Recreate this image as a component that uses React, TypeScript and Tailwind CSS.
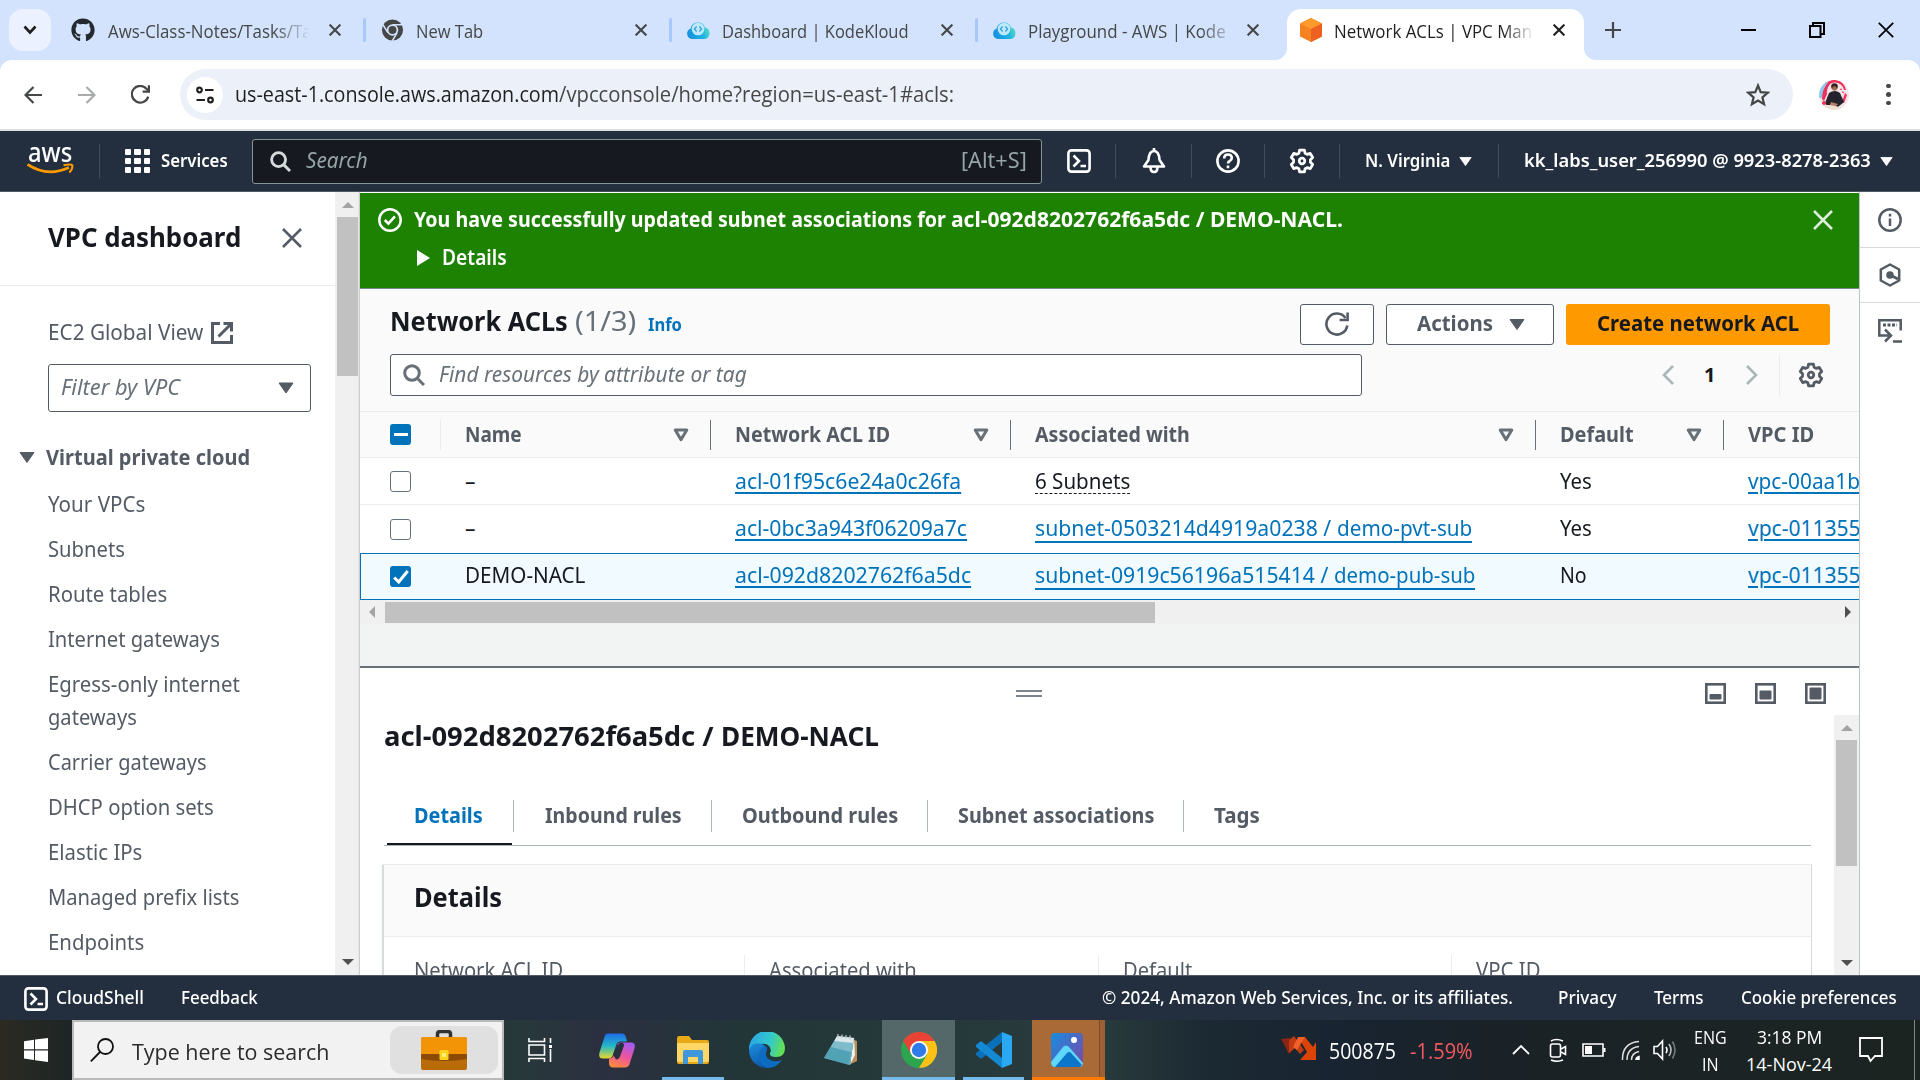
import React, { useLayoutEffect, useRef, useState } from "react";
import { FaGithub } from "react-icons/fa";

type TextProps = { w: number; className?: string; children: React.ReactNode };

/* Single-line text that is condensed or widened to an exact width. */
function T({ w, className = "", children }: TextProps) {
  const ref = useRef<HTMLSpanElement>(null);
  const [scale, setScale] = useState(1);
  useLayoutEffect(() => {
    if (ref.current) setScale(w / ref.current.offsetWidth);
  }, [w]);
  return (
    <span className="inline-block shrink-0 whitespace-nowrap" style={{ width: w }}>
      <span ref={ref} className={`inline-block origin-left ${className}`} style={{ transform: `scaleX(${scale})` }}>
        {children}
      </span>
    </span>
  );
}

type IconProps = { className?: string };

const CloseX = ({ className = "" }: IconProps) => (
  <svg viewBox="0 0 20 20" className={`shrink-0 ${className}`} fill="none" stroke="currentColor">
    <path d="M1 1l18 18M19 1L1 19" />
  </svg>
);

const Caret = ({ className = "" }: IconProps) => (
  <svg viewBox="0 0 16 12" className={`shrink-0 ${className}`} fill="currentColor" stroke="currentColor" strokeLinejoin="round">
    <path d="M1 1h14l-7 10z" />
  </svg>
);

const SortCaret = ({ className = "" }: IconProps) => (
  <svg viewBox="0 0 16 14" className={`h-[14px] w-4 shrink-0 text-[#687078] ${className}`} fill="none" stroke="currentColor" strokeWidth="3" strokeLinejoin="round">
    <path d="M2.2 2h11.6L8 11.6z" />
  </svg>
);

const Magnifier = ({ className = "" }: IconProps) => (
  <svg viewBox="0 0 22 22" className={`shrink-0 ${className}`} fill="none" stroke="currentColor" strokeWidth="3">
    <circle cx="9" cy="9" r="7.3" />
    <path d="M14 14l7 7" />
  </svg>
);

const ShellIcon = ({ className = "" }: IconProps) => (
  <svg viewBox="0 0 24 24" className={`h-6 w-6 shrink-0 ${className}`} fill="none" stroke="currentColor" strokeWidth="2.6">
    <rect x="1.4" y="1.4" width="21.2" height="21.2" rx="3" />
    <path d="M6.5 6.5l5.5 5.5-5.5 5.5M13.5 17h5.5" />
  </svg>
);

const Gear = ({ className = "" }: IconProps) => (
  <svg viewBox="0 0 16 16" className={`h-[26px] w-[26px] shrink-0 ${className}`} fill="none" stroke="currentColor" strokeWidth="1.7" strokeLinejoin="round">
    <path d="M6.5 1.3h3l.4 1.9 1.3.7 1.9-.6 1.5 2.5-1.4 1.4v1.6l1.4 1.4-1.5 2.5-1.9-.6-1.3.7-.4 1.9h-3l-.4-1.9-1.3-.7-1.9.6-1.5-2.5 1.4-1.4V7.2L1.400 5.8l1.500-2.500 1.900.6 1.300-.7z" />
    <circle cx="8" cy="8" r="1.700" />
  </svg>
);

const Reload = ({ className = "" }: IconProps) => (
  <svg viewBox="0 0 24 24" className={`h-6 w-6 shrink-0 ${className}`} fill="none" stroke="currentColor" strokeWidth="2.6">
    <path d="M22.300 13.500A10.500 10.500 0 1 1 20.500 6" />
    <path d="M22.600 0.500v7.500h-8" />
  </svg>
);

const ChromeGray = ({ className = "" }: IconProps) => (
  <svg viewBox="0 0 24 24" className={`h-6 w-[23px] shrink-0 ${className}`}>
    <circle cx="12" cy="12" r="11" fill="#444746" />
    <circle cx="12" cy="12" r="6" fill="#d3e3fd" />
    <circle cx="12" cy="12" r="4.200" fill="#444746" />
    <path d="M12 6.500h10M7.200 14.800L2 6.500M16.800 14.800l-5 8.600" stroke="#d3e3fd" strokeWidth="1.600" />
  </svg>
);

const KodeCloud = ({ className = "" }: IconProps) => (
  <svg viewBox="0 0 24 20" className={`h-5 w-6 shrink-0 ${className}`}>
    <defs>
      <linearGradient id="kk" x1="0" x2="1" y1="0.6" y2="0.3">
        <stop offset="0" stopColor="#1590e0" />
        <stop offset="0.6" stopColor="#1fb4e4" />
        <stop offset="1" stopColor="#5fe0c0" />
      </linearGradient>
    </defs>
    <path d="M5.500 19A5.500 5.500 0 0 1 4.600 8.500 7.500 7.500 0 0 1 19 7.600 5.800 5.800 0 0 1 18.500 19z" fill="url(#kk)" />
    <circle cx="12" cy="9" r="6.300" fill="#bfe9fa" />
    <path d="M10.600 6.500L8.400 9l2.200 2.500M13.400 6.500L15.600 9l-2.200 2.500" fill="none" stroke="#2aa0df" strokeWidth="1.200" />
  </svg>
);

const VpcCube = () => (
  <svg viewBox="0 0 22 24" className="h-6 w-[22px] shrink-0">
    <path d="M11 0l11 5.500v13L11 24 0 18.500v-13z" fill="#f58220" />
    <path d="M11 0l11 5.500-11 5.500L0 5.500z" fill="#fd9a2b" />
    <path d="M11 11l11-5.500v13L11 24z" fill="#ee5f22" />
  </svg>
);

const TabSep = () => <div className="h-6 w-[3px] shrink-0 rounded bg-[#a8c7fa]" />;
const TabClose = ({ className = "" }: IconProps) => <CloseX className={`h-3 w-3 stroke-[3.500] ${className}`} />;

function TabStrip() {
  return (
    <div className="flex h-[60px] items-start bg-[#d3e3fd] text-[18px] leading-[24px] text-[#444746]">
      <div className="ml-[9px] mt-[9px] flex h-[42px] w-[42px] items-center justify-center rounded-[14px] bg-[#ebf1fe]">
        <svg viewBox="0 0 14 10" className="h-[10px] w-[14px] text-[#1f1f1f]" fill="none" stroke="currentColor" strokeWidth="2.600">
          <path d="M1.500 1.500L7 7.500l5.500-6" />
        </svg>
      </div>
      <div className="flex h-[60px] items-center">
        <FaGithub className="ml-[20px] h-6 w-6 text-[#24292f]" />
        <div className="ml-[13px] mt-[2px] w-[202px] overflow-hidden [mask-image:linear-gradient(to_right,#000_82%,transparent_100%)]">
          <T w={204}>Aws-Class-Notes/Tasks/Ta</T>
        </div>
        <TabClose className="ml-[19px]" />
        <div className="ml-[22px]"><TabSep /></div>
        <ChromeGray className="ml-[15px]" />
        <div className="ml-[12px] mt-[2px] w-[219px]"><T w={67}>New Tab</T></div>
        <TabClose />
        <div className="ml-[22px]"><TabSep /></div>
        <KodeCloud className="ml-[14px]" />
        <div className="ml-3 mt-[2px] w-[219px]"><T w={187}>Dashboard | KodeKloud</T></div>
        <TabClose />
        <div className="ml-[22px]"><TabSep /></div>
        <KodeCloud className="ml-[14px]" />
        <div className="ml-3 mt-[2px] w-[200px] overflow-hidden [mask-image:linear-gradient(to_right,#000_86%,transparent_105%)]">
          <T w={198}>Playground - AWS | Kode</T>
        </div>
        <TabClose className="ml-[19px]" />
      </div>
      <div className="ml-[16px] mt-[9px] flex h-[51px] items-end">
        <svg viewBox="0 0 12 12" className="h-3 w-3"><path d="M12 0v12H0A12 12 0 0 0 12 0z" fill="#fff" /></svg>
        <div className="flex h-[51px] w-[297px] items-center rounded-t-[14px] bg-white pb-[9px] text-[#1f1f1f]">
          <div className="ml-[13px] flex"><VpcCube /></div>
          <div className="ml-[12px] mt-[2px] w-[197px] overflow-hidden [mask-image:linear-gradient(to_right,#000_86%,transparent_102%)]">
            <T w={198}>Network ACLs | VPC Man</T>
          </div>
          <TabClose className="ml-[22px]" />
        </div>
        <svg viewBox="0 0 12 12" className="h-3 w-3"><path d="M0 0v12h12A12 12 0 0 1 0 0z" fill="#fff" /></svg>
      </div>
      <div className="flex h-[60px] items-center text-black">
        <svg viewBox="0 0 16 16" className="ml-[9px] h-4 w-4 text-[#444746]" stroke="currentColor" strokeWidth="2.200"><path d="M8 0v16M0 8h16" /></svg>
        <div className="ml-[120px] h-[2px] w-[15px] bg-black" />
        <svg viewBox="0 0 16 16" className="ml-[53px] h-4 w-4" fill="none" stroke="currentColor" strokeWidth="2"><path d="M1 4h10.500v11H1zM4 4V1h11v11h-3.500" /></svg>
        <CloseX className="ml-[53px] h-4 w-4 stroke-[2.200]" />
      </div>
    </div>
  );
}

function AddressBar() {
  return (
    <div className="bg-[#d3e3fd]">
      <div className="flex h-[69px] items-center rounded-t-[12px] bg-white text-[21px] leading-[30px] text-[#444746]">
        <svg viewBox="0 0 18 18" className="ml-6 h-[18px] w-[18px]" fill="none" stroke="currentColor" strokeWidth="2.200"><path d="M18 9H1.500M9.500 1L1.500 9l8 8" /></svg>
        <svg viewBox="0 0 18 18" className="ml-9 h-[18px] w-[18px] text-[#a9abab]" fill="none" stroke="currentColor" strokeWidth="2.200"><path d="M0 9h16.500M8.500 1l8 8-8 8" /></svg>
        <svg viewBox="0 0 18 18" className="ml-[35px] h-[19px] w-[19px]" fill="none" stroke="currentColor" strokeWidth="2.100"><path d="M16.300 11a7.900 7.900 0 1 1-1.400-7.200L17 6" /><path d="M17 .3v6h-6" /></svg>
        <div className="ml-[30px] flex h-[51px] w-[1613px] items-center rounded-full bg-[#ecf0f9]">
          <div className="ml-[7px] flex h-9 w-9 items-center justify-center rounded-full bg-white">
            <svg viewBox="0 0 18 18" className="h-[18px] w-[18px] text-[#1f1f1f]" fill="none" stroke="currentColor" strokeWidth="2.200">
              <circle cx="3.500" cy="4" r="2.300" /><path d="M9 4h8.500M.5 14H9" /><circle cx="14.500" cy="14" r="2.300" />
            </svg>
          </div>
          <div className="-mt-px ml-3 flex w-[1511px]">
            <T w={324} className="text-[#1f1f1f]">us-east-1.console.aws.amazon.com</T>
            <T w={395} className="text-[#474747]">/vpcconsole/home?region=us-east-1#acls:</T>
          </div>
          <svg viewBox="0 0 24 24" className="h-6 w-6" fill="none" stroke="currentColor" strokeWidth="2.200"><path d="M12 2.500l2.700 6.600 7.100.6-5.400 4.600 1.700 6.900-6.100-3.700-6.100 3.700 1.700-6.900-5.400-4.600 7.100-.6z" /></svg>
        </div>
        <svg viewBox="0 0 30 30" className="ml-[26px] h-[30px] w-[30px]">
          <defs><clipPath id="av"><circle cx="15" cy="15" r="15" /></clipPath></defs>
          <g clipPath="url(#av)">
            <rect width="30" height="30" fill="#f4e4e8" />
            <path d="M0 5l9-5v8L3 18H0z" fill="#8fc8ec" />
            <path d="M10 1a12 12 0 0 1 17 9l-2 0a9 9 0 0 0-14-6q-4 5-3 10l-3 7-2-2q0-10 7-18z" fill="#f0305c" />
            <path d="M23 11l2 1-1 2zM26 13l2 2-3 8-2-1zM22 8l1 2-2 0z" fill="#f0305c" />
            <circle cx="15.500" cy="6.500" r="3.300" fill="#33221f" />
            <circle cx="15.500" cy="8.500" r="2.300" fill="#a46b50" />
            <path d="M10 13q6-4 11 0l4 9-6 5H9l-3-4z" fill="#25242c" />
            <path d="M12 22l7 2-3 3-5-2z" fill="#b98068" />
            <path d="M3 25l8 0 10 2 8-2v5H3z" fill="#efe2d4" />
            <circle cx="5" cy="23" r="2" fill="#f0305c" />
          </g>
        </svg>
        <div className="ml-[37px] flex flex-col gap-1">
          <i className="h-[4.500px] w-[4.500px] rounded-full bg-[#444746]" />
          <i className="h-[4.500px] w-[4.500px] rounded-full bg-[#444746]" />
          <i className="h-[4.500px] w-[4.500px] rounded-full bg-[#444746]" />
        </div>
      </div>
      <div className="h-[2px] bg-[#dddfe1]" />
    </div>
  );
}

const NavSep = ({ className = "" }: IconProps) => <div className={`h-[34px] w-px shrink-0 bg-[#414d5c] ${className}`} />;

function AwsHeader() {
  return (
    <div className="h-[61px] border-b border-[#545b64] bg-[#232f3e] text-[18px] font-semibold text-white">
      <div className="flex h-[60px] items-center">
        <div className="ml-[27px] w-[47px]">
          <div className="-mt-[8px] h-[22px] pl-px text-[27px] font-medium leading-[24px]"><T w={44}>aws</T></div>
          <svg viewBox="0 0 47 12" className="mt-px h-3 w-[47px]" fill="none" stroke="#ff9900" strokeWidth="2.800">
            <path d="M0.500 1.500Q20 14.500 42 4.500" />
            <path d="M36.500 2.200q7.500-1.500 9 .2 0 4-3.200 7" strokeWidth="2" />
          </svg>
        </div>
        <NavSep className="ml-[25px]" />
        <div className="ml-[25px] grid grid-cols-3 gap-[3px]">
          {[0, 1, 2, 3, 4, 5, 6, 7, 8].map((i) => <i key={i} className="h-[6.300px] w-[6.300px] rounded-[1px] bg-white" />)}
        </div>
        <div className="-mt-px ml-[11px]"><T w={67}>Services</T></div>
        <div className="ml-[24px] flex h-[45px] w-[790px] items-center rounded-[3px] border border-[#879596] bg-[#16191f] text-[21px] font-normal text-[#95a5a6]">
          <Magnifier className="ml-[17px] h-[21px] w-[21px] text-[#d5dbdb]" />
          <div className="ml-[15px] w-[655px] italic"><T w={62}>Search</T></div>
          <T w={66}>[Alt+S]</T>
        </div>
        <ShellIcon className="ml-[25px]" />
        <NavSep className="ml-6" />
        <svg viewBox="0 0 24 26" className="ml-[26px] h-[26px] w-6" fill="none" stroke="currentColor" strokeWidth="2.600">
          <path d="M2 18.500h20l-4.500-6.500q-.5-9-5.500-9t-5.500 9z" strokeLinejoin="round" /><path d="M12 0v3M8.500 19q0 5 3.500 5t3.500-5" />
        </svg>
        <NavSep className="ml-[25px]" />
        <svg viewBox="0 0 24 24" className="ml-[24px] h-6 w-6" fill="none" stroke="currentColor" strokeWidth="2.600">
          <circle cx="12" cy="12" r="10.600" /><path d="M8.200 9.500q0-4 3.800-4t3.800 3.500q0 1.800-2 3-1.800 1-1.800 2.600M12 16.600v2.600" />
        </svg>
        <NavSep className="ml-6" />
        <Gear className="ml-6" />
        <NavSep className="ml-6" />
        <div className="-mt-px ml-[25px]"><T w={85}>N. Virginia</T></div>
        <Caret className="ml-[9px] h-[11px] w-[13px]" />
        <NavSep className="ml-[26px]" />
        <div className="-mt-px ml-[25px]"><T w={347}>kk_labs_user_256990 @ 9923-8278-2363</T></div>
        <Caret className="ml-[9px] h-[11px] w-[13px]" />
      </div>
    </div>
  );
}

const sideLinks: { label: string; w: number }[] = [
  { label: "Your VPCs", w: 97 },
  { label: "Subnets", w: 77 },
  { label: "Route tables", w: 119 },
  { label: "Internet gateways", w: 172 },
  { label: "Egress-only internet", w: 192 },
  { label: "gateways", w: 89 },
  { label: "Carrier gateways", w: 159 },
  { label: "DHCP option sets", w: 166 },
  { label: "Elastic IPs", w: 94 },
  { label: "Managed prefix lists", w: 191 },
  { label: "Endpoints", w: 96 },
];

function ScrollArrow({ dir, on }: { dir: "up" | "down"; on?: boolean }) {
  return (
    <svg viewBox="0 0 12 6" className={`h-[6px] w-3 ${dir === "down" ? "rotate-180" : ""} ${on ? "text-[#505050]" : "text-[#a3a3a3]"}`} fill="currentColor">
      <path d="M6 0l6 6H0z" />
    </svg>
  );
}

function Sidebar() {
  return (
    <div className="flex w-[360px] shrink-0 bg-white text-[21px] text-[#545b64]">
      <div className="w-[335px]">
        <div className="flex h-[94px] items-center border-b border-[#eaeded] pb-[2px] text-[#16191f]">
          <div className="ml-12 text-[26px] font-bold"><T w={193}>VPC dashboard</T></div>
          <CloseX className="ml-[41px] h-5 w-5 stroke-[2.500] text-[#545b64]" />
        </div>
        <div className="mt-[30px] flex h-[33px] items-center">
          <div className="ml-12"><T w={155}>EC2 Global View</T></div>
          <svg viewBox="0 0 22 22" className="ml-2 h-[22px] w-[22px]" fill="none" stroke="currentColor" strokeWidth="3">
            <path d="M9 1.500H1.500v19h19V13M12.500 1.500h8v8M20 2L7.500 14.500" />
          </svg>
        </div>
        <div className="ml-12 mt-[15px] flex h-[48px] w-[263px] items-center rounded-[3px] border border-[#545b64] italic text-[#687078]">
          <div className="ml-[12px] w-[217px]"><T w={119}>Filter by VPC</T></div>
          <Caret className="h-3 w-4 text-[#545b64]" />
        </div>
        <div className="mt-[29px] flex h-[33px] items-center font-bold">
          <Caret className="ml-[19px] h-[13px] w-4" />
          <div className="ml-[11px]"><T w={204}>Virtual private cloud</T></div>
        </div>
        <div className="ml-[48px] mt-[13.500px] flex flex-col gap-3 leading-[33px]">
          {sideLinks.map((l) => (
            <div key={l.label} className={l.label === "gateways" ? "-mt-3 h-[33px]" : "h-[33px]"}><T w={l.w}>{l.label}</T></div>
          ))}
        </div>
      </div>
      <div className="flex w-[25px] flex-col items-center bg-[#f0f0f0] pt-[10px]">
        <ScrollArrow dir="up" />
        <div className="mt-[9px] h-[159px] w-[21px] bg-[#c1c1c1]" />
        <div className="mb-[10px] mt-auto"><ScrollArrow dir="down" on /></div>
      </div>
    </div>
  );
}

function Flash() {
  return (
    <div className="h-[96px] border-b border-[#7d8a96] bg-[#1d8102] text-[21px] text-white">
      <div className="flex h-[53px] items-center">
        <svg viewBox="0 0 24 24" className="ml-[18px] h-6 w-6 shrink-0" fill="none" stroke="currentColor" strokeWidth="2.500">
          <circle cx="12" cy="12" r="10.700" /><path d="M6.800 12l3.600 3.600 6.500-7.300" />
        </svg>
        <div className="ml-3 flex w-[1399px] font-bold">
          <T w={537}>You have successfully updated subnet associations for&nbsp;</T>
          <T w={392}>acl-092d8202762f6a5dc / DEMO-NACL.</T>
        </div>
        <CloseX className="h-5 w-5 stroke-[2.500] text-[#e0eedc]" />
      </div>
      <div className="-mt-[5px] flex h-[34px] items-center font-semibold">
        <svg viewBox="0 0 13 16" className="ml-[57px] h-4 w-[13px]" fill="currentColor"><path d="M0 0l13 8-13 8z" /></svg>
        <div className="ml-3"><T w={65}>Details</T></div>
      </div>
    </div>
  );
}

function TableToolbar() {
  return (
    <div className="h-[123px] border-b border-[#eaeded] bg-[#fafafa] pl-[30px] pt-[14px] text-[21px]">
      <div className="flex h-[42px] items-center">
        <div className="-mt-[6px] flex w-[910px] items-baseline">
          <T w={178} className="text-[26px] font-bold text-[#16191f]">Network ACLs</T>
          <div className="ml-[7px]"><T w={61} className="text-[27px] text-[#687078]">(1/3)</T></div>
          <div className="ml-3"><T w={34} className="text-[18px] font-bold text-[#0073bb]">Info</T></div>
        </div>
        <div className="flex h-[41px] w-[74px] items-center justify-center rounded-[3px] border border-[#545b64] bg-white text-[#545b64]"><Reload /></div>
        <div className="ml-3 flex h-[41px] w-[168px] items-center rounded-[3px] border border-[#545b64] bg-white font-bold text-[#545b64]">
          <div className="ml-[30px]"><T w={76}>Actions</T></div>
          <Caret className="ml-4 h-[13px] w-4" />
        </div>
        <div className="ml-3 flex h-[41px] w-[264px] items-center justify-center rounded-[3px] bg-[#ff9900] font-bold text-[#16191f]"><T w={202}>Create network ACL</T></div>
      </div>
      <div className="mt-[9px] flex h-[42px] items-center">
        <div className="flex h-[42px] w-[972px] items-center rounded-[3px] border border-[#545b64] bg-white italic text-[#687078]">
          <Magnifier className="ml-3 h-[22px] w-[22px]" />
          <div className="ml-[14px]"><T w={308}>Find resources by attribute or tag</T></div>
        </div>
        <svg viewBox="0 0 12 20" className="ml-[300px] h-5 w-3 text-[#aab7b8]" fill="none" stroke="currentColor" strokeWidth="2.600"><path d="M11 1L2 10l9 9" /></svg>
        <div className="ml-[30px] text-[20px] font-bold text-[#16191f]"><T w={11}>1</T></div>
        <svg viewBox="0 0 12 20" className="ml-[31px] h-5 w-3 text-[#aab7b8]" fill="none" stroke="currentColor" strokeWidth="2.600"><path d="M1 1l9 9-9 9" /></svg>
        <div className="ml-[21px] h-[41px] w-px bg-[#eaeded]" />
        <Gear className="ml-[18px] text-[#545b64]" />
      </div>
    </div>
  );
}

const ColSep = ({ className = "bg-[#687078]" }: IconProps) => <div className={`h-[30px] w-px shrink-0 ${className}`} />;

function Checkbox({ state }: { state: "off" | "on" | "mixed" }) {
  if (state === "off") return <div className="h-[21px] w-[21px] shrink-0 rounded-[3px] border border-[#687078] bg-white" />;
  return (
    <div className="flex h-[21px] w-[21px] shrink-0 items-center justify-center rounded-[3px] bg-[#0073bb]">
      {state === "mixed" ? (
        <div className="h-[3px] w-[14px] bg-white" />
      ) : (
        <svg viewBox="0 0 16 16" className="h-4 w-4" fill="none" stroke="#fff" strokeWidth="3"><path d="M1.200 8.500l4.500 4.500 9-11" /></svg>
      )}
    </div>
  );
}

type Part = { text: string; w: number };
type Row = { name: string; nameW: number; id: string; idW: number; assoc: Part[]; link: boolean; def: string; defW: number; vpc: string; vpcW: number; selected: boolean };
const rows: Row[] = [
  { name: "–", nameW: 11, id: "acl-01f95c6e24a0c26fa", idW: 226, assoc: [{ text: "6 Subnets", w: 95 }], link: false, def: "Yes", defW: 32, vpc: "vpc-00aa1b", vpcW: 112, selected: false },
  { name: "–", nameW: 11, id: "acl-0bc3a943f06209a7c", idW: 232, assoc: [{ text: "subnet-0503214d4919a0238 /\u00a0", w: 302 }, { text: "demo-pvt-sub", w: 135 }], link: true, def: "Yes", defW: 32, vpc: "vpc-011355", vpcW: 113, selected: false },
  { name: "DEMO-NACL", nameW: 120, id: "acl-092d8202762f6a5dc", idW: 236, assoc: [{ text: "subnet-0919c56196a515414 /\u00a0", w: 299 }, { text: "demo-pub-sub", w: 141 }], link: true, def: "No", defW: 27, vpc: "vpc-011355", vpcW: 113, selected: true },
];

const linkCls = "text-[#0073bb] underline decoration-2 underline-offset-[3px]";

function AclTable() {
  return (
    <div className="overflow-hidden text-[21px] leading-[28px] text-[#16191f]">
      <div className="flex h-[46px] items-center border-b border-[#eaeded] bg-[#fafafa] pl-[30px] font-bold text-[#545b64]">
        <Checkbox state="mixed" />
        <div className="ml-[29px]"><ColSep className="bg-[#eaeded]" /></div>
        <div className="-mt-[2px] ml-6 w-[208px]"><T w={57}>Name</T></div>
        <SortCaret />
        <div className="ml-[21px]"><ColSep /></div>
        <div className="-mt-[2px] ml-[24px] w-[238px]"><T w={155}>Network ACL ID</T></div>
        <SortCaret />
        <div className="ml-[21px]"><ColSep /></div>
        <div className="-mt-[2px] ml-6 w-[463px]"><T w={155}>Associated with</T></div>
        <SortCaret />
        <div className="ml-[21px]"><ColSep /></div>
        <div className="-mt-[2px] ml-6 w-[126px]"><T w={74}>Default</T></div>
        <SortCaret />
        <div className="ml-[21px]"><ColSep /></div>
        <div className="-mt-[2px] ml-6"><T w={66}>VPC ID</T></div>
      </div>
      {rows.map((r, i) => (
        <div
          key={r.id}
          className={
            r.selected
              ? "flex h-[47px] items-center border-y border-l border-[#0073bb] bg-[#f1faff] pl-[29px]"
              : i === 0
                ? "flex h-[47px] items-center border-b border-[#eaeded] bg-white pl-[30px]"
                : "flex h-[48px] items-center bg-white pl-[30px]"
          }
        >
          <Checkbox state={r.selected ? "on" : "off"} />
          <div className={`flex items-center ${i === 0 ? "-mt-px" : "-mt-[3px]"}`}>
            <div className="ml-[54px] w-[270px]"><T w={r.nameW}>{r.name}</T></div>
            <div className="w-[300px]"><T w={r.idW} className={linkCls}>{r.id}</T></div>
            <div className="flex h-[28px] w-[525px]">
              {r.assoc.map((p) => (
                <T key={p.text} w={p.w} className={r.link ? "h-[29px] border-b-2 border-[#0073bb] text-[#0073bb]" : "h-[27px] border-b border-dashed border-[#16191f]"}>{p.text}</T>
              ))}
            </div>
            <div className="w-[188px]"><T w={r.defW}>{r.def}</T></div>
            <T w={r.vpcW} className={linkCls}>{r.vpc}</T>
          </div>
        </div>
      ))}
      <div className="flex h-6 items-center bg-[#f0f0f0]">
        <svg viewBox="0 0 6 12" className="ml-[9px] h-3 w-[6px] text-[#a3a3a3]" fill="currentColor"><path d="M6 0v12L0 6z" /></svg>
        <div className="ml-[10px] h-[21px] w-[770px] bg-[#c1c1c1]" />
        <svg viewBox="0 0 6 12" className="ml-auto mr-[8px] h-3 w-[6px] text-[#505050]" fill="currentColor"><path d="M0 0v12l6-6z" /></svg>
      </div>
    </div>
  );
}

function PanelIcon({ level }: { level: 1 | 2 | 3 }) {
  return (
    <svg viewBox="0 0 21 21" className="h-[21px] w-[21px] text-[#545b64]" fill="none" stroke="currentColor" strokeWidth="2.600">
      <rect x="1.300" y="1.300" width="18.400" height="18.400" />
      {level === 1 && <rect x="4.500" y="11" width="12" height="5.500" rx="1" fill="currentColor" stroke="none" />}
      {level === 2 && <rect x="4.500" y="7.500" width="12" height="9" rx="1" fill="currentColor" stroke="none" />}
      {level === 3 && <rect x="4.500" y="4.500" width="12" height="12" rx="1" fill="currentColor" stroke="none" />}
    </svg>
  );
}

const TabDivider = () => <div className="h-8 w-px shrink-0 bg-[#aab7b8]" />;

function DetailField({ label, w, first }: { label: string; w: number; first?: boolean }) {
  return (
    <div className={`h-[60px] ${first ? "w-[330px]" : "w-[353.500px] border-l border-[#eaeded] pl-6"}`}>
      <T w={w}>{label}</T>
    </div>
  );
}

function SplitPanel() {
  return (
    <div className="flex h-[309px] flex-col overflow-hidden border-t-2 border-[#687078] bg-white text-[21px] text-[#545b64]">
      <div className="flex h-[47px] shrink-0 items-start">
        <div className="ml-[656px] mt-[22px] h-[7px] w-[26px] border-y-2 border-[#7d848c]" />
        <div className="ml-[663px] mt-[15px] flex gap-[29px]"><PanelIcon level={1} /><PanelIcon level={2} /><PanelIcon level={3} /></div>
      </div>
      <div className="flex min-h-0 flex-1">
        <div className="w-[1475px] overflow-hidden pl-[23px]">
          <div className="ml-px flex h-[43px] items-center text-[26px] font-bold text-[#16191f]">
            <T w={337}>acl-092d8202762f6a5dc /&nbsp;</T>
            <T w={158}>DEMO-NACL</T>
          </div>
          <div className="ml-px mt-[27px] flex h-[61px] w-[1427px] border-b border-[#aab7b8] font-bold">
            <div className="ml-[3px] flex h-[60px] w-[125px] border-b-2 border-[#16191f] pl-[27px] pt-[16px] leading-[28px] text-[#0073bb]"><T w={69}>Details</T></div>
            <div className="ml-px flex h-[60px] items-center pt-[2px]">
              <TabDivider />
              <div className="ml-[31px]"><T w={137}>Inbound rules</T></div>
              <div className="ml-[29px]"><TabDivider /></div>
              <div className="ml-[30px]"><T w={156}>Outbound rules</T></div>
              <div className="ml-[29px]"><TabDivider /></div>
              <div className="ml-[30px]"><T w={196}>Subnet associations</T></div>
              <div className="ml-[29px]"><TabDivider /></div>
              <div className="ml-[30px]"><T w={46}>Tags</T></div>
            </div>
          </div>
          <div className="mt-[18px] h-[160px] w-[1429px] border border-[#eaeded] border-l-[#d5dbdb] border-r-[#d5dbdb] shadow-[-1px_1px_1px_rgba(0,28,36,0.15)]">
            <div className="flex h-[72px] items-center border-b border-[#eaeded] bg-[#fafafa] pb-[7px] pl-[30px] text-[26px] font-bold text-[#16191f]"><T w={88}>Details</T></div>
            <div className="flex pl-[30px] pt-[18px]">
              <DetailField label="Network ACL ID" w={149} first />
              <DetailField label="Associated with" w={148} />
              <DetailField label="Default" w={69} />
              <DetailField label="VPC ID" w={65} />
            </div>
          </div>
        </div>
        <div className="flex w-[25px] flex-col items-center bg-[#f0f0f0] pt-[10px]">
          <ScrollArrow dir="up" />
          <div className="mt-[9px] h-[126px] w-[21px] bg-[#c1c1c1]" />
          <div className="mb-[9px] mt-auto"><ScrollArrow dir="down" on /></div>
        </div>
      </div>
    </div>
  );
}

function RightRail() {
  return (
    <div className="flex w-[61px] shrink-0 flex-col border-l border-[#bcc4c6] bg-white pt-px text-[#545b64]">
      <div className="flex h-[55px] items-center justify-center border-b border-[#d5dbdb]">
        <svg viewBox="0 0 24 24" className="h-6 w-6" fill="none" stroke="currentColor" strokeWidth="2.500"><circle cx="12" cy="12" r="10.700" /><path d="M12 10.500v7.500M12 5.800v2.700" /></svg>
      </div>
      <div className="flex h-[55px] items-center justify-center border-b border-[#d5dbdb]">
        <svg viewBox="0 0 24 24" className="h-6 w-6" fill="none" stroke="currentColor" strokeWidth="2.500"><path d="M12 1.500l9.200 5v11l-9.200 5-9.200-5v-11z" strokeLinejoin="round" /><circle cx="12" cy="12" r="2.500" fill="currentColor" /><path d="M12 12l8 4" strokeWidth="3" /></svg>
      </div>
      <div className="flex h-[55px] items-center justify-center">
        <svg viewBox="0 0 24 24" className="h-6 w-6" fill="none" stroke="currentColor" strokeWidth="2.500">
          <path d="M22.700 11.500V1.300H1.300v15.200H11M7 10.500l6 6-6 6M15 22.500h9" /><path d="M5 6h14" strokeWidth="3" strokeDasharray="3 1.500" />
        </svg>
      </div>
    </div>
  );
}

function Footer() {
  return (
    <div className="h-[45px] border-t border-[#545b64] bg-[#232f3e] text-[18px] font-medium text-white">
      <div className="flex h-[43px] items-center">
        <ShellIcon className="ml-6 mt-[3px]" />
        <div className="ml-2"><T w={88}>CloudShell</T></div>
        <div className="ml-[37px] w-[921px]"><T w={77}>Feedback</T></div>
        <T w={411}>© 2024, Amazon Web Services, Inc. or its affiliates.</T>
        <div className="ml-[45px]"><T w={59}>Privacy</T></div>
        <div className="ml-[37px]"><T w={50}>Terms</T></div>
        <div className="ml-[37px]"><T w={156}>Cookie preferences</T></div>
      </div>
    </div>
  );
}

function Taskbar() {
  return (
    <div className="flex h-[60px] items-center bg-[linear-gradient(to_right,#2b2a22_0px,#1b2426_90px,#27383a_520px,#2b3040_600px,#223638_740px,#293b3c_1100px,#1c2a33_1200px,#182431_1340px,#1a2227_1500px,#1c2422_1900px)] text-[22px] text-white">
      <svg viewBox="0 0 24 24" className="ml-6 h-6 w-6 shrink-0" fill="#fff"><path d="M0 3.300l10-1.500v9.500H0zM11 1.600L24 0v11.300H11zM0 12.500h10V22L0 20.500zM11 12.500h13V24l-13-1.700z" /></svg>
      <div className="ml-6 flex h-[60px] w-[432px] shrink-0 items-center border-2 border-[#b9b9b9] bg-[#f2f2f2] text-[#2b2b2b]">
        <svg viewBox="0 0 24 24" className="ml-4 h-6 w-6" fill="none" stroke="#111" strokeWidth="1.800"><circle cx="15.500" cy="8.500" r="7.500" /><path d="M10 14L.8 23.300" /></svg>
        <div className="ml-[18px] mt-[2px] w-[258px]"><T w={197}>Type here to search</T></div>
        <div className="flex h-[48px] w-[108px] items-center justify-center rounded-[12px] bg-[#e0e0e0]">
          <svg viewBox="0 0 46 40" className="mb-px h-10 w-[46px]">
            <path d="M16.500 7V4q0-2.500 3-2.500h7q3 0 3 2.500v3" fill="none" stroke="#333" strokeWidth="3.500" />
            <rect y="7" width="46" height="33" rx="2" fill="#b86b08" />
            <path d="M0 24h46v5q-23 4-46 0z" fill="#8d4a04" />
            <path d="M0 9q0-2 2-2h42q2 0 2 2v15H0z" fill="#f39407" />
            <rect x="18.500" y="20" width="9" height="10" rx="1" fill="#ffd21c" />
            <rect x="21" y="23" width="4" height="4" fill="#fff07a" />
          </svg>
        </div>
      </div>
      <svg viewBox="0 0 24 24" className="ml-6 h-6 w-6 shrink-0" fill="none" stroke="#fff" strokeWidth="1.600"><path d="M1 0v3.500h15.500V0M1 24v-3.500h15.500V24M1 7h15.500v10H1zM22.500 0v5M22.500 11v13" /><path d="M22.500 7v3" strokeWidth="3" /></svg>
      <svg viewBox="0 0 36 34" className="ml-[47px] h-[35px] w-9 shrink-0">
        <defs>
          <linearGradient id="cpa" x1="0" x2="0" y1="0" y2="1"><stop offset="0" stopColor="#1f6be8" /><stop offset="0.5" stopColor="#22b8c8" /><stop offset="1" stopColor="#e8d92c" /></linearGradient>
          <linearGradient id="cpb" x1="0.700" x2="0.300" y1="0" y2="1"><stop offset="0" stopColor="#a45af0" /><stop offset="0.550" stopColor="#f0559a" /><stop offset="1" stopColor="#fb8a3c" /></linearGradient>
        </defs>
        <path d="M9 0h14q3 0 4 4l1 4h-6q-4 0-5 4l-3 9q-1 4-5 4H4q-5 0-3.500-6L5 5q1-5 4-5z" fill="url(#cpa)" />
        <path d="M22 9h10q5 0 3.500 6L31 29q-1 5-5 5H14q-4 0-4-5v-4q4 0 5-4l3-9q1-3 4-3z" fill="url(#cpb)" />
        <path d="M18 12l4-3q3 0 3 3l-4 11q-1 3-4 3l-3-5z" fill="#26303f" />
      </svg>
      <div className="ml-[27px] flex h-[60px] w-[62px] shrink-0 flex-col items-center border-b-[3px] border-[#76b9ed] pt-4">
        <svg viewBox="0 0 32 28" className="h-7 w-8">
          <path d="M0 2q0-2 2-2h10l3 4h15q2 0 2 2v20q0 2-2 2H2q-2 0-2-2z" fill="#e8a917" /><path d="M0 7h32v17q0 2-2 2H2q-2 0-2-2z" fill="#ffd766" />
          <path d="M6 28V16q0-2 2-2h16q2 0 2 2v12h-5v-7H11v7z" fill="#3f97dc" />
        </svg>
      </div>
      <svg viewBox="0 0 36 36" className="ml-[25px] h-9 w-9 shrink-0">
        <defs>
          <linearGradient id="eda" x1="0" x2="1" y1="0.300" y2="0.500"><stop offset="0" stopColor="#28a7ea" /><stop offset="0.600" stopColor="#35c9c9" /><stop offset="1" stopColor="#66e04f" /></linearGradient>
          <linearGradient id="edb" x1="0" x2="0.500" y1="0" y2="1"><stop offset="0" stopColor="#1b8fdc" /><stop offset="1" stopColor="#0d53a8" /></linearGradient>
        </defs>
        <path d="M0 18a18 18 0 0 1 36-2q0 9-9 9-7 0-6-4 2-3-1-7-3-3-8-2Q3 13 0 18z" fill="url(#eda)" />
        <path d="M0 18Q3 9 13 12q4 2 5 4-5 4-1 11 5 6 16 1-6 8-15 8A18 18 0 0 1 0 18z" fill="url(#edb)" />
        <path d="M15 14q4 1 3 4-4 8 6 11 4 1 9-1-6 8-15 8-8-4-8-12 0-6 5-10z" fill="#0b6cc0" />
      </svg>
      <svg viewBox="0 0 34 32" className="ml-[39px] h-8 w-[34px] shrink-0">
        <path d="M30 6l3 1v20l-6 3z" fill="#b9905a" />
        <path d="M30 3l1 18-5 10z" fill="#eef3f3" />
        <path d="M13 2l17 2-4 27L0 24z" fill="#7fbccb" />
        <path d="M13 2l17 2-.8 5L10.500 7z" fill="#dce9ec" />
        <path d="M7 13l20 5-2 13L0 24z" fill="#3f97ad" opacity="0.700" />
        <path d="M14 0v4M18 .5v4M22 1v4M26 1.500v4" stroke="#c5cfd2" strokeWidth="1.200" />
      </svg>
      <div className="ml-[24px] flex h-[60px] w-[73px] shrink-0 flex-col items-center border-b-[3px] border-[#76b9ed] bg-[#546769] pt-3">
        <svg viewBox="0 0 36 36" className="h-9 w-9">
          <circle cx="18" cy="18" r="18" fill="#2da44e" />
          <path d="M18 18L2.400 9A18 18 0 0 1 33.600 9z" fill="#ea4335" />
          <path d="M18 9h15.600A18 18 0 0 1 18 36l8-13.500z" fill="#fbc116" />
          <path d="M2.400 9l8 13.500L18 9z" fill="#ea4335" />
          <circle cx="18" cy="18" r="9" fill="#fff" /><circle cx="18" cy="18" r="7.200" fill="#2f7bea" />
        </svg>
      </div>
      <div className="ml-[8px] flex h-[60px] w-[61px] shrink-0 flex-col items-center border-b-[3px] border-[#76b9ed] pt-3">
        <svg viewBox="0 0 36 36" className="h-9 w-9">
          <path d="M26 0l10 4v28l-10 4z" fill="#2aa8f2" /><path d="M26 0v10L5 27l-5-4v-2z" fill="#0a70b8" /><path d="M26 36V26L5 9l-5 4v2z" fill="#1489d4" />
        </svg>
      </div>
      <div className="ml-2 flex h-[60px] w-[73px] shrink-0 border-b-[3px] border-[#ff7a00] bg-[#a96a38]">
        <div className="flex w-[67px] justify-center pl-[3px] pt-[13px]">
          <svg viewBox="0 0 32 34" className="h-[34px] w-8">
            <defs><linearGradient id="pho" x1="0" x2="1" y1="0" y2="0.700"><stop offset="0" stopColor="#168de0" /><stop offset="1" stopColor="#6f50b0" /></linearGradient></defs>
            <rect width="32" height="34" rx="4" fill="url(#pho)" /><path d="M0 29l12-15q3-3 6 0l14 16q0 4-4 4H4q-4 0-4-5z" fill="#5ed7fb" /><path d="M4 34l12-14q2-2 4 0l11 12-2 2z" fill="#0b75c9" /><circle cx="23" cy="7" r="3" fill="#fff" />
          </svg>
        </div>
        <div className="w-[6px] border-l border-[#7d4d28] bg-[#9c6032]" />
      </div>
      <svg viewBox="0 0 36 24" className="-mt-[5px] ml-[176px] h-[24px] w-[36px] shrink-0"><path d="M0 3l8-1 7 8-7 8z" fill="#8a2415" /><path d="M8 17L8 4l5-4 10 14-4 4-5-6z" fill="#c23a12" /><path d="M17 1h7l8 10 3-5v18H19l7-8z" fill="#dc4405" /><path d="M17 1h7l-8 13-4-3z" fill="#f0622a" /></svg>
      <div className="ml-3 mt-[2px]"><T w={67} className="text-[21px]">500875</T></div>
      <div className="ml-[14px] mt-[2px] text-[#f4595f]"><T w={63} className="text-[21px]">-1.59%</T></div>
      <svg viewBox="0 0 18 10" className="ml-[39px] h-[10px] w-[18px] shrink-0" fill="none" stroke="#fff" strokeWidth="1.800"><path d="M1 9l8-8 8 8" /></svg>
      <svg viewBox="0 0 18 24" className="ml-[19px] h-6 w-[18px] shrink-0" fill="none" stroke="#fff" strokeWidth="1.600"><rect x="1.500" y="6" width="10" height="13" rx="2" /><path d="M12 11l4.500-2.500v8L12 14M2 3q5-3 12 0M2 22q5 2.500 12 0" /></svg>
      <svg viewBox="0 0 24 14" className="ml-[15px] h-[14px] w-6 shrink-0" fill="none" stroke="#fff" strokeWidth="1.600"><path d="M1 1h20v12H1z" /><path d="M3 3h7v8H3z" fill="#fff" stroke="none" /><path d="M22.500 5v4" strokeWidth="2" /></svg>
      <svg viewBox="0 0 20 20" className="ml-[15px] h-5 w-5 shrink-0" fill="none" stroke="#fff" strokeWidth="1.500"><path d="M1.500 20Q1 3 18 1.500M6 20Q6 8 18 6.500M10.500 20q0-7 7.500-8.500" opacity="0.850" /><path d="M15 19.500q0-2 3-3v3z" fill="#fff" /></svg>
      <svg viewBox="0 0 24 22" className="ml-[12px] h-[22px] w-6 shrink-0" fill="none" stroke="#fff" strokeWidth="1.600"><path d="M1 7.500h3.500l5-5.500v18l-5-5.500H1zM13 8q2 3 0 6" /><path d="M16 5q4 6 0 12" opacity="0.700" /><path d="M19.500 2.500q5 8.500 0 17" opacity="0.400" /></svg>
      <div className="ml-[16px] mt-px flex w-[34px] shrink-0 flex-col items-center text-[18px] leading-[27px]"><T w={33}>ENG</T><T w={17}>IN</T></div>
      <div className="ml-[19px] mt-px flex w-[86px] shrink-0 flex-col items-center text-[18px] leading-[27px]"><T w={65}>3:18 PM</T><T w={86}>14-Nov-24</T></div>
      <svg viewBox="0 0 24 26" className="ml-[27px] h-[26px] w-6 shrink-0" fill="none" stroke="#fff" strokeWidth="1.800"><path d="M1 1h22v18h-7l-4.500 5L9 19H1z" /></svg>
      <div className="ml-[31px] h-[60px] w-px bg-[#7f8685]" />
    </div>
  );
}

export default function App() {
  return (
    <div className="flex h-[1080px] w-[1920px] flex-col overflow-hidden bg-white font-['Noto_Sans','Open_Sans',sans-serif]">
      <div className="font-['Open_Sans','Noto_Sans',sans-serif]">
        <TabStrip />
        <AddressBar />
      </div>
      <AwsHeader />
      <div className="flex h-[783px]">
        <Sidebar />
        <div className="flex w-[1499px] shrink-0 flex-col pt-px shadow-[0_0_2px_rgba(0,28,36,0.500)]">
          <Flash />
          <TableToolbar />
          <AclTable />
          <div className="flex-1 bg-[#f2f3f3]" />
          <SplitPanel />
        </div>
        <RightRail />
      </div>
      <Footer />
      <div className="font-['Open_Sans','Noto_Sans',sans-serif]">
        <Taskbar />
      </div>
    </div>
  );
}
